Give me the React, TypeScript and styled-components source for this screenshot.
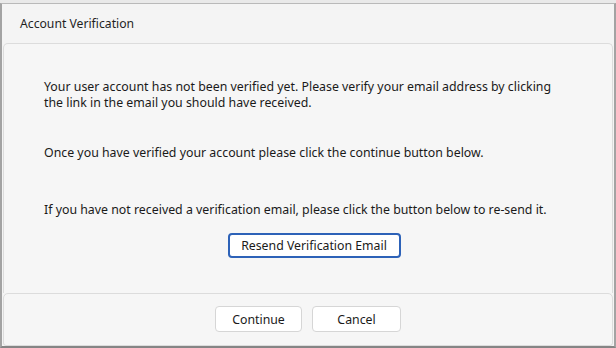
import React from "react";
import styled, { createGlobalStyle } from "styled-components";

const Global = createGlobalStyle`
  html, body { margin: 0; padding: 0; background: #e9e9e9; }
  body { font-family: "Noto Sans", "Open Sans", sans-serif; }
  * { box-sizing: border-box; }
`;

const Window = styled.div`
  margin-top: 3px;
  width: 616px;
  height: 345px;
  background: #f4f4f4;
  border-top: 1px solid #b9b9b9;
  border-left: 2px solid #a3a3a3;
  border-right: 2px solid #a3a3a3;
  border-bottom: 2px solid #858585;
  display: flex;
  flex-direction: column;
`;

const TitleBar = styled.div`
  height: 39px;
  padding-left: 18px;
  display: flex;
  align-items: center;
  font-size: 12.2px;
  color: #1f1f1f;
`;

const Content = styled.div`
  margin: 0 1px;
  height: 250px;
  border: 1px solid #dcdcdc;
  border-bottom: none;
  border-radius: 5px 5px 0 0;
  background: #f6f6f6;
  padding: 35px 28px 0 40px;
  display: flex;
  flex-direction: column;
`;

const Para = styled.p<{ $gap?: number }>`
  margin: 0 0 ${(p) => p.$gap ?? 0}px 0;
  font-size: 12.35px;
  line-height: 16px;
  color: #1a1a1a;
  white-space: nowrap;
`;

const Center = styled.div`
  display: flex;
  justify-content: center;
`;

const Button = styled.button<{ $primary?: boolean; $w: number }>`
  width: ${(p) => p.$w}px;
  height: ${(p) => (p.$primary ? 25 : 26)}px;
  background: #ffffff;
  border: ${(p) => (p.$primary ? "2px solid #2d62b8" : "1px solid #d6d6d6")};
  border-radius: 4px;
  font-family: inherit;
  font-size: 12.3px;
  color: #1a1a1a;
  padding: 0;
  cursor: pointer;
`;

const Footer = styled.div`
  flex: 1;
  margin: 0 1px;
  border: 1px solid #dcdcdc;
  border-radius: 5px 5px 3px 3px;
  background: #f6f6f6;
  display: flex;
  justify-content: center;
  align-items: center;
  gap: 10px;
  padding-bottom: 1px;
`;

export default function App() {
  return (
    <>
      <Global />
      <Window>
        <TitleBar>Account Verification</TitleBar>
        <Content>
          <Para $gap={34}>
            Your user account has not been verified yet. Please verify your email address by clicking
            <br />
            the link in the email you should have received.
          </Para>
          <Para $gap={41}>Once you have verified your account please click the continue button below.</Para>
          <Para $gap={15}>
            If you have not received a verification email, please click the button below to re-send it.
          </Para>
          <Center>
            <Button $primary $w={173}>Resend Verification Email</Button>
          </Center>
        </Content>
        <Footer>
          <Button $w={87}>Continue</Button>
          <Button $w={89}>Cancel</Button>
        </Footer>
      </Window>
    </>
  );
}
